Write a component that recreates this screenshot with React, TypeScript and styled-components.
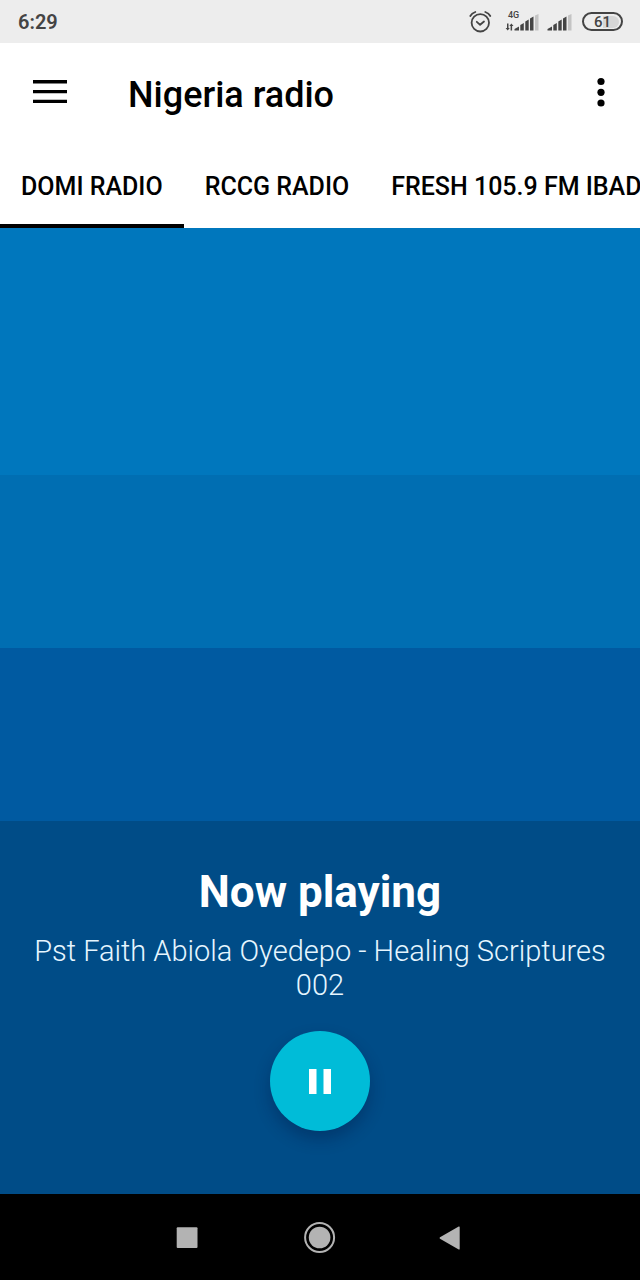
import React, { useState } from "react";
import styled, { createGlobalStyle } from "styled-components";

const GlobalStyle = createGlobalStyle`
  *, *::before, *::after { box-sizing: border-box; }
  body { margin: 0; background: #000; font-family: Roboto, "Liberation Sans", sans-serif; }
  button { margin: 0; padding: 0; border: 0; background: none; color: inherit; font: inherit; cursor: pointer; }
  h1, h2, p { margin: 0; }
  svg { display: block; }
`;

const Screen = styled.div`
  display: flex;
  flex-direction: column;
  min-height: 100vh;
  background: #fff;
`;

const StatusBar = styled.div`
  display: flex;
  align-items: center;
  justify-content: space-between;
  height: 43px;
  padding: 0 17px 0 18px;
  background: #ededed;
  color: #444;
`;

const Clock = styled.time`
  font-size: 20px;
  font-weight: 600;
  line-height: 24px;
`;

const StatusIcons = styled.div`
  display: flex;
  align-items: center;
`;

const Signals = styled.div`
  display: flex;
  gap: 8px;
  margin: 0 10px 0 12px;
`;

const Network = styled.div`
  position: relative;
`;

const NetworkLabel = styled.span`
  position: absolute;
  top: 0;
  left: 4px;
  font-size: 9px;
  font-weight: 500;
  line-height: 9px;
`;

const Battery = styled.div`
  display: flex;
  align-items: center;
  justify-content: center;
  width: 41px;
  height: 19px;
  padding: 2px;
  border: 2px solid #444;
  border-radius: 10px;
`;

const BatteryLevel = styled.span`
  width: 100%;
  border-radius: 6px;
  background: linear-gradient(to right, transparent 50%, #d6d6d6 50%);
  font-size: 15px;
  font-weight: 500;
  line-height: 12px;
  text-align: center;
`;

const AppBar = styled.header`
  display: flex;
  align-items: center;
  height: 102px;
  padding: 0 21px 0 26px;
  color: #000;
`;

const IconButton = styled.button<{ $width: number }>`
  display: flex;
  align-items: center;
  justify-content: center;
  flex: none;
  width: ${({ $width }) => $width}px;
  height: 48px;
  margin-bottom: 4px;
`;

const Title = styled.h1`
  flex: 1;
  padding: 2px 0 0 54px;
  font-size: 36px;
  font-weight: 500;
  line-height: 42px;
`;

const Tabs = styled.nav`
  display: flex;
  height: 83px;
  overflow: hidden;
  background: #fff;
`;

const Tab = styled.button<{ $active: boolean }>`
  flex: none;
  padding: 5px 21px 0;
  border-bottom: 4px solid ${({ $active }) => ($active ? "#000" : "transparent")};
  color: #000;
  font-size: 25px;
  font-weight: 500;
  line-height: 30px;
  white-space: nowrap;
`;

const Player = styled.main`
  display: flex;
  flex: 1;
  flex-direction: column;
`;

const Band = styled.div<{ $color: string; $grow: number }>`
  flex: ${({ $grow }) => $grow} 0 0;
  background: ${({ $color }) => $color};
`;

const NowPlaying = styled.section`
  display: flex;
  flex-direction: column;
  align-items: center;
  padding: 45px 32px 63px;
  background: #004c87;
  color: #fff;
  text-align: center;
`;

const Heading = styled.h2`
  font-size: 44px;
  font-weight: 700;
  line-height: 52px;
`;

const Track = styled.p`
  margin: 16px 0 29px;
  font-size: 29px;
  font-weight: 300;
  line-height: 34px;
  color: #e6f6ff;
`;

const PauseButton = styled.button`
  display: flex;
  align-items: center;
  justify-content: center;
  width: 100px;
  height: 100px;
  border-radius: 50%;
  background: #00bcd8;
  box-shadow: 0 8px 16px rgba(0, 20, 60, 0.32);
`;

const SystemNav = styled.nav`
  display: flex;
  align-items: center;
  justify-content: center;
  gap: 99px;
  height: 86px;
  background: #000;
`;

const NavButton = styled.button`
  width: 32px;
  height: 32px;
`;

function SignalBars({ data = false }: { data?: boolean }) {
  const start = data ? 10 : 0;
  return (
    <svg width={start + 25} height="22" viewBox={`0 0 ${start + 25} 22`} fill="#444" aria-hidden="true">
      {data && (
        <path d="M3 12.500h1.500v4.500h1.300L3.700 19.500 1.600 17H3zM6.600 19.500V15H5.300l2.100-2.500L9.500 15H8.100v4.500z" />
      )}
      <g transform={`translate(${start} 0)`}>
        <path d="M.5 19.500V18l4.500-2.500v4zM6.300 14l3.500-2v7.500H6.300zM11.300 10.500l3.400-2v11h-3.400zM16 7.500l3.500-2v14H16z" />
        <path d="M21 4.500L24.500 3v16.500H21z" fill="#c4c4c4" />
      </g>
    </svg>
  );
}

function AlarmIcon() {
  return (
    <svg width="24" height="24" viewBox="0 0 24 24" fill="none" stroke="#444" strokeWidth="1.800" strokeLinecap="round" strokeLinejoin="round" role="img" aria-label="Alarm set">
      <circle cx="12.300" cy="12.800" r="8.700" />
      <path d="M8.800 11.800l3.300 3 3.900-3.300M2.300 6q1.500-2.800 5-4M22.300 6q-1.500-2.800-5-4" />
    </svg>
  );
}

const stations = ["DOMI RADIO", "RCCG RADIO", "FRESH 105.9 FM IBADAN"];

export default function App() {
  const [active, setActive] = useState(0);
  const [playing, setPlaying] = useState(true);

  return (
    <>
      <GlobalStyle />
      <Screen>
        <StatusBar>
          <Clock>6:29</Clock>
          <StatusIcons>
            <AlarmIcon />
            <Signals>
              <Network>
                <NetworkLabel>4G</NetworkLabel>
                <SignalBars data />
              </Network>
              <SignalBars />
            </Signals>
            <Battery>
              <BatteryLevel>61</BatteryLevel>
            </Battery>
          </StatusIcons>
        </StatusBar>
        <AppBar>
          <IconButton $width={48} aria-label="Open menu">
            <svg width="34" height="24" viewBox="0 0 34 24" fill="#000">
              <path d="M0 0h34v3.500H0zM0 10h34v3.300H0zM0 19.800h34v3.300H0z" />
            </svg>
          </IconButton>
          <Title>Nigeria radio</Title>
          <IconButton $width={36} aria-label="More options">
            <svg width="8" height="30" viewBox="0 0 8 30" fill="#000">
              <circle cx="4" cy="4.500" r="3.600" />
              <circle cx="4" cy="15.300" r="3.600" />
              <circle cx="4" cy="26" r="3.600" />
            </svg>
          </IconButton>
        </AppBar>
        <Tabs aria-label="Stations">
          {stations.map((name, index) => (
            <Tab key={name} $active={index === active} aria-pressed={index === active} onClick={() => setActive(index)}>
              {name}
            </Tab>
          ))}
        </Tabs>
        <Player>
          <Band $color="#0077bd" $grow={247} />
          <Band $color="#006eb2" $grow={173} />
          <Band $color="#005aa1" $grow={173} />
          <NowPlaying>
            <Heading>Now playing</Heading>
            <Track>Pst Faith Abiola Oyedepo - Healing Scriptures 002</Track>
            <PauseButton aria-label={playing ? "Pause" : "Play"} onClick={() => setPlaying(!playing)}>
              <svg width="24" height="26" viewBox="0 0 24 26" fill="#fff">
                <path d={playing ? "M1 1h7.500v25H1zM15.500 1H23v25h-7.500z" : "M4 1l18 12L4 25z"} />
              </svg>
            </PauseButton>
          </NowPlaying>
        </Player>
        <SystemNav aria-label="System">
          <NavButton aria-label="Recent apps">
            <svg width="32" height="32" viewBox="0 0 32 32" fill="#b3b3b3">
              <rect x="3.700" y="6.200" width="20.800" height="20.800" rx="1" />
            </svg>
          </NavButton>
          <NavButton aria-label="Home">
            <svg width="32" height="32" viewBox="0 0 32 32" fill="#b3b3b3">
              <circle cx="15.600" cy="16.500" r="10.800" />
              <circle cx="15.600" cy="16.500" r="14.500" fill="none" stroke="#b3b3b3" strokeWidth="2" />
            </svg>
          </NavButton>
          <NavButton aria-label="Back">
            <svg width="32" height="32" viewBox="0 0 32 32" fill="#b3b3b3">
              <path d="M5 16.200L23.700 5.600q1-.5 1 .7v21.400q0 1.200-1 .7L5 17.800q-1-.8 0-1.600z" />
            </svg>
          </NavButton>
        </SystemNav>
      </Screen>
    </>
  );
}
